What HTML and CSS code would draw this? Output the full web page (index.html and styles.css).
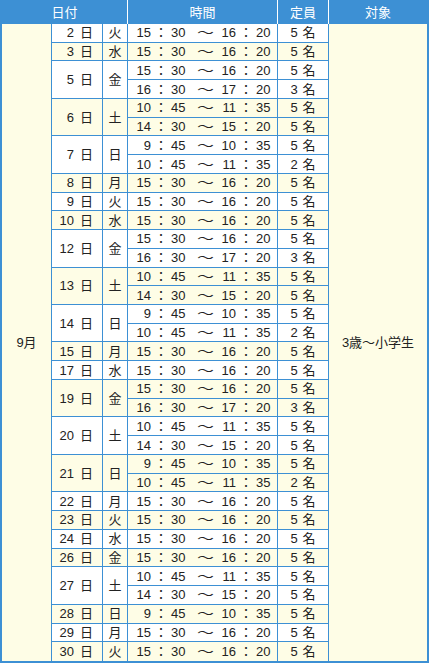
FILE: index.html
```html
<!DOCTYPE html>
<html lang="ja">
<head>
<meta charset="utf-8">
<title>9月 スケジュール</title>
<link rel="stylesheet" href="styles.css">
</head>
<body>
<div class="schedule">
  <div class="hd hd-date">日付</div>
  <div class="hd">時間</div>
  <div class="hd">定員</div>
  <div class="hd hd-last">対象</div>
  <div class="month">9月</div>
  <div class="target">3歳〜小学生</div>

  <div class="day w"><span class="n">2</span><span class="u">日</span></div>
  <div class="wd w">火</div>
  <div class="time w"><span>15</span><span>：</span><span>30</span><span>〜</span><span>16</span><span>：</span><span>20</span></div>
  <div class="cap w"><span>5</span><span>名</span></div>

  <div class="day c"><span class="n">3</span><span class="u">日</span></div>
  <div class="wd c">水</div>
  <div class="time c"><span>15</span><span>：</span><span>30</span><span>〜</span><span>16</span><span>：</span><span>20</span></div>
  <div class="cap c"><span>5</span><span>名</span></div>

  <div class="day w s2"><span class="n">5</span><span class="u">日</span></div>
  <div class="wd w s2">金</div>
  <div class="time w"><span>15</span><span>：</span><span>30</span><span>〜</span><span>16</span><span>：</span><span>20</span></div>
  <div class="cap w"><span>5</span><span>名</span></div>
  <div class="time w"><span>16</span><span>：</span><span>30</span><span>〜</span><span>17</span><span>：</span><span>20</span></div>
  <div class="cap w"><span>3</span><span>名</span></div>

  <div class="day c s2"><span class="n">6</span><span class="u">日</span></div>
  <div class="wd c s2">土</div>
  <div class="time c"><span>10</span><span>：</span><span>45</span><span>〜</span><span>11</span><span>：</span><span>35</span></div>
  <div class="cap c"><span>5</span><span>名</span></div>
  <div class="time c"><span>14</span><span>：</span><span>30</span><span>〜</span><span>15</span><span>：</span><span>20</span></div>
  <div class="cap c"><span>5</span><span>名</span></div>

  <div class="day w s2"><span class="n">7</span><span class="u">日</span></div>
  <div class="wd w s2">日</div>
  <div class="time w"><span>9</span><span>：</span><span>45</span><span>〜</span><span>10</span><span>：</span><span>35</span></div>
  <div class="cap w"><span>5</span><span>名</span></div>
  <div class="time w"><span>10</span><span>：</span><span>45</span><span>〜</span><span>11</span><span>：</span><span>35</span></div>
  <div class="cap w"><span>2</span><span>名</span></div>

  <div class="day c"><span class="n">8</span><span class="u">日</span></div>
  <div class="wd c">月</div>
  <div class="time c"><span>15</span><span>：</span><span>30</span><span>〜</span><span>16</span><span>：</span><span>20</span></div>
  <div class="cap c"><span>5</span><span>名</span></div>

  <div class="day w"><span class="n">9</span><span class="u">日</span></div>
  <div class="wd w">火</div>
  <div class="time w"><span>15</span><span>：</span><span>30</span><span>〜</span><span>16</span><span>：</span><span>20</span></div>
  <div class="cap w"><span>5</span><span>名</span></div>

  <div class="day c"><span class="n">10</span><span class="u">日</span></div>
  <div class="wd c">水</div>
  <div class="time c"><span>15</span><span>：</span><span>30</span><span>〜</span><span>16</span><span>：</span><span>20</span></div>
  <div class="cap c"><span>5</span><span>名</span></div>

  <div class="day w s2"><span class="n">12</span><span class="u">日</span></div>
  <div class="wd w s2">金</div>
  <div class="time w"><span>15</span><span>：</span><span>30</span><span>〜</span><span>16</span><span>：</span><span>20</span></div>
  <div class="cap w"><span>5</span><span>名</span></div>
  <div class="time w"><span>16</span><span>：</span><span>30</span><span>〜</span><span>17</span><span>：</span><span>20</span></div>
  <div class="cap w"><span>3</span><span>名</span></div>

  <div class="day c s2"><span class="n">13</span><span class="u">日</span></div>
  <div class="wd c s2">土</div>
  <div class="time c"><span>10</span><span>：</span><span>45</span><span>〜</span><span>11</span><span>：</span><span>35</span></div>
  <div class="cap c"><span>5</span><span>名</span></div>
  <div class="time c"><span>14</span><span>：</span><span>30</span><span>〜</span><span>15</span><span>：</span><span>20</span></div>
  <div class="cap c"><span>5</span><span>名</span></div>

  <div class="day w s2"><span class="n">14</span><span class="u">日</span></div>
  <div class="wd w s2">日</div>
  <div class="time w"><span>9</span><span>：</span><span>45</span><span>〜</span><span>10</span><span>：</span><span>35</span></div>
  <div class="cap w"><span>5</span><span>名</span></div>
  <div class="time w"><span>10</span><span>：</span><span>45</span><span>〜</span><span>11</span><span>：</span><span>35</span></div>
  <div class="cap w"><span>2</span><span>名</span></div>

  <div class="day c"><span class="n">15</span><span class="u">日</span></div>
  <div class="wd c">月</div>
  <div class="time c"><span>15</span><span>：</span><span>30</span><span>〜</span><span>16</span><span>：</span><span>20</span></div>
  <div class="cap c"><span>5</span><span>名</span></div>

  <div class="day w"><span class="n">17</span><span class="u">日</span></div>
  <div class="wd w">水</div>
  <div class="time w"><span>15</span><span>：</span><span>30</span><span>〜</span><span>16</span><span>：</span><span>20</span></div>
  <div class="cap w"><span>5</span><span>名</span></div>

  <div class="day c s2"><span class="n">19</span><span class="u">日</span></div>
  <div class="wd c s2">金</div>
  <div class="time c"><span>15</span><span>：</span><span>30</span><span>〜</span><span>16</span><span>：</span><span>20</span></div>
  <div class="cap c"><span>5</span><span>名</span></div>
  <div class="time c"><span>16</span><span>：</span><span>30</span><span>〜</span><span>17</span><span>：</span><span>20</span></div>
  <div class="cap c"><span>3</span><span>名</span></div>

  <div class="day w s2"><span class="n">20</span><span class="u">日</span></div>
  <div class="wd w s2">土</div>
  <div class="time w"><span>10</span><span>：</span><span>45</span><span>〜</span><span>11</span><span>：</span><span>35</span></div>
  <div class="cap w"><span>5</span><span>名</span></div>
  <div class="time w"><span>14</span><span>：</span><span>30</span><span>〜</span><span>15</span><span>：</span><span>20</span></div>
  <div class="cap w"><span>5</span><span>名</span></div>

  <div class="day c s2"><span class="n">21</span><span class="u">日</span></div>
  <div class="wd c s2">日</div>
  <div class="time c"><span>9</span><span>：</span><span>45</span><span>〜</span><span>10</span><span>：</span><span>35</span></div>
  <div class="cap c"><span>5</span><span>名</span></div>
  <div class="time c"><span>10</span><span>：</span><span>45</span><span>〜</span><span>11</span><span>：</span><span>35</span></div>
  <div class="cap c"><span>2</span><span>名</span></div>

  <div class="day w"><span class="n">22</span><span class="u">日</span></div>
  <div class="wd w">月</div>
  <div class="time w"><span>15</span><span>：</span><span>30</span><span>〜</span><span>16</span><span>：</span><span>20</span></div>
  <div class="cap w"><span>5</span><span>名</span></div>

  <div class="day c"><span class="n">23</span><span class="u">日</span></div>
  <div class="wd c">火</div>
  <div class="time c"><span>15</span><span>：</span><span>30</span><span>〜</span><span>16</span><span>：</span><span>20</span></div>
  <div class="cap c"><span>5</span><span>名</span></div>

  <div class="day w"><span class="n">24</span><span class="u">日</span></div>
  <div class="wd w">水</div>
  <div class="time w"><span>15</span><span>：</span><span>30</span><span>〜</span><span>16</span><span>：</span><span>20</span></div>
  <div class="cap w"><span>5</span><span>名</span></div>

  <div class="day c"><span class="n">26</span><span class="u">日</span></div>
  <div class="wd c">金</div>
  <div class="time c"><span>15</span><span>：</span><span>30</span><span>〜</span><span>16</span><span>：</span><span>20</span></div>
  <div class="cap c"><span>5</span><span>名</span></div>

  <div class="day w s2"><span class="n">27</span><span class="u">日</span></div>
  <div class="wd w s2">土</div>
  <div class="time w"><span>10</span><span>：</span><span>45</span><span>〜</span><span>11</span><span>：</span><span>35</span></div>
  <div class="cap w"><span>5</span><span>名</span></div>
  <div class="time w"><span>14</span><span>：</span><span>30</span><span>〜</span><span>15</span><span>：</span><span>20</span></div>
  <div class="cap w"><span>5</span><span>名</span></div>

  <div class="day c"><span class="n">28</span><span class="u">日</span></div>
  <div class="wd c">日</div>
  <div class="time c"><span>9</span><span>：</span><span>45</span><span>〜</span><span>10</span><span>：</span><span>35</span></div>
  <div class="cap c"><span>5</span><span>名</span></div>

  <div class="day w"><span class="n">29</span><span class="u">日</span></div>
  <div class="wd w">月</div>
  <div class="time w"><span>15</span><span>：</span><span>30</span><span>〜</span><span>16</span><span>：</span><span>20</span></div>
  <div class="cap w"><span>5</span><span>名</span></div>

  <div class="day c last"><span class="n">30</span><span class="u">日</span></div>
  <div class="wd c last">火</div>
  <div class="time c last"><span>15</span><span>：</span><span>30</span><span>〜</span><span>16</span><span>：</span><span>20</span></div>
  <div class="cap c last"><span>5</span><span>名</span></div>
</div>
</body>
</html>
```

FILE: styles.css
```css
* {
  box-sizing: border-box;
}

html,
body {
  margin: 0;
  background: #ffffff;
}

body {
  font-family: "Liberation Sans", "Noto Sans CJK JP", sans-serif;
  font-size: 13px;
  color: #222222;
}

.schedule {
  display: grid;
  width: 429px;
  grid-template-columns: 50px 51px 25px 150px 51px 98px;
  grid-template-rows: 24px repeat(34, 18.735px);
  border: 2px solid #3d90d4;
  border-top: 0;
}

.schedule > div {
  display: flex;
  align-items: center;
  line-height: 1;
  border-right: 1px solid #3d90d4;
  border-bottom: 1px solid #3d90d4;
}

.hd {
  justify-content: center;
  background: #3d90d4;
  color: #ffffff;
  border-right-color: #ffffff !important;
  border-bottom: 0 !important;
}

.hd-date {
  grid-column: span 3;
}

.hd-last {
  border-right: 0 !important;
}

.month {
  grid-column: 1;
  grid-row: 2 / span 34;
  justify-content: center;
  background: #fefde6;
  border-bottom: 0 !important;
}

.target {
  grid-column: 6;
  grid-row: 2 / span 34;
  justify-content: center;
  background: #fefde6;
  border-right: 0 !important;
  border-bottom: 0 !important;
}

.w {
  background: #ffffff;
}

.c {
  background: #fefde6;
}

.s2 {
  grid-row: span 2;
}

.last {
  border-bottom: 0 !important;
}

.day {
  padding-left: 6px;
}

.day .n {
  width: 16px;
  text-align: right;
}

.day .u {
  margin-left: 6px;
}

.wd {
  justify-content: center;
}

.schedule > .cap {
  justify-content: center;
  gap: 5px;
}

.schedule > .time {
  display: grid;
  grid-template-columns: 16px 20px 15px 35px 15px 20px 15px;
  align-items: center;
  padding-left: 7px;
}

.time span:nth-child(1),
.time span:nth-child(5) {
  text-align: right;
}

.time span:nth-child(2),
.time span:nth-child(4),
.time span:nth-child(6) {
  text-align: center;
}

.time span:nth-child(4) {
  display: inline-block;
  transform: translateX(2px) scaleX(1.3);
}
```
